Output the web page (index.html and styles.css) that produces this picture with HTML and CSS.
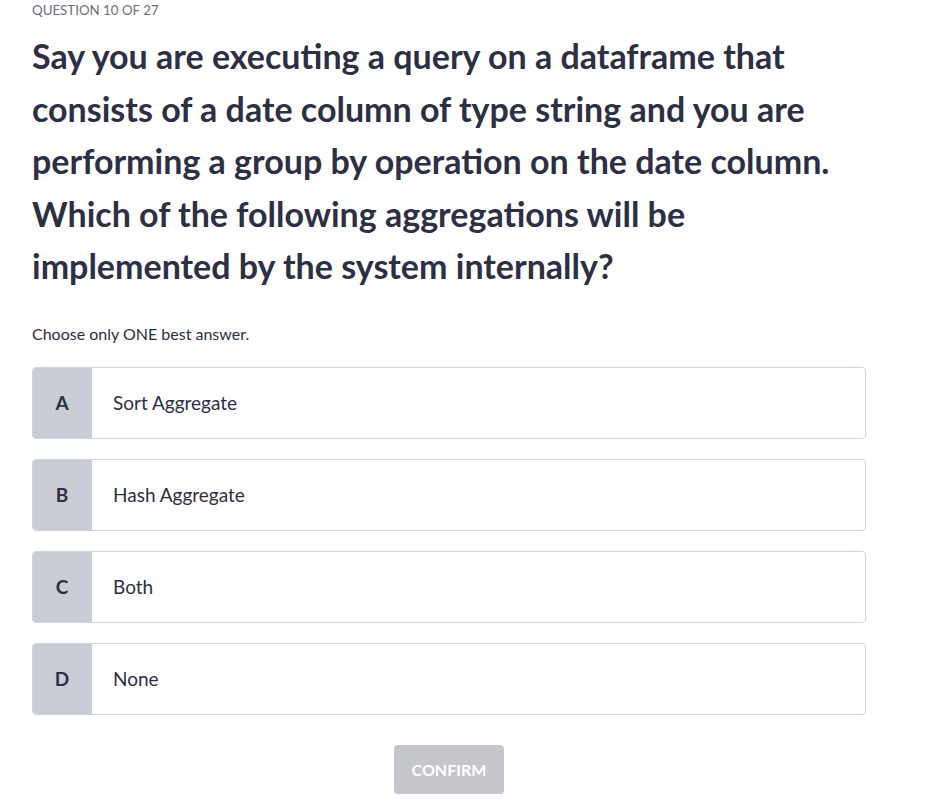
FILE: index.html
```html
<!DOCTYPE html>
<html lang="en">
<head>
<meta charset="utf-8">
<title>Question 10 of 27</title>
<link rel="stylesheet" href="styles.css">
</head>
<body>
<main class="quiz">
  <div class="label">QUESTION 10 OF 27</div>
  <h1 class="title">Say you are executing a query on a dataframe that consists of a date column of type string and you are performing a group by operation on the date column. Which of the following aggregations will be implemented by the system internally?</h1>
  <p class="instr">Choose only ONE best answer.</p>
  <ul class="options">
    <li class="option"><span class="letter">A</span><span class="text">Sort Aggregate</span></li>
    <li class="option"><span class="letter">B</span><span class="text">Hash Aggregate</span></li>
    <li class="option"><span class="letter">C</span><span class="text">Both</span></li>
    <li class="option"><span class="letter">D</span><span class="text">None</span></li>
  </ul>
  <div class="actions"><button class="confirm" disabled>CONFIRM</button></div>
</main>
</body>
</html>
```
FILE: styles.css
```css
* { box-sizing: border-box; }
body {
  margin: 0;
  background: #ffffff;
  font-family: Lato, "Open Sans", sans-serif;
  color: #2d2f45;
}
.quiz {
  width: 834px;
  margin-left: 32px;
}
.label {
  font-size: 13.3px;
  line-height: 20px;
  color: #6a6f7a;
}
.title {
  margin: 10px 0 0;
  font-size: 34px;
  line-height: 52.5px;
  font-weight: 700;
  color: #2d2f45;
}
.instr {
  margin: 29px 0 0;
  font-size: 16px;
  line-height: 24px;
  color: #2d2f45;
}
.options {
  list-style: none;
  margin: 21px 0 0;
  padding: 0;
  display: flex;
  flex-direction: column;
  gap: 20px;
}
.option {
  display: flex;
  align-items: stretch;
  height: 72px;
  border: 1px solid #d1d2e0;
  border-radius: 4px;
  overflow: hidden;
  background: #fff;
}
.letter {
  width: 60px;
  flex: none;
  display: flex;
  align-items: center;
  justify-content: center;
  background: #cacdd6;
  font-weight: 700;
  font-size: 19px;
  margin: -1px 0 -1px -1px;
}
.text {
  display: flex;
  align-items: center;
  padding-left: 21px;
  font-size: 19px;
}
.actions {
  display: flex;
  justify-content: center;
  margin-top: 30px;
}
.confirm {
  width: 110px;
  height: 49px;
  border: none;
  border-radius: 4px;
  background: #c5c6cc;
  color: #fff;
  font-family: inherit;
  font-weight: 700;
  font-size: 16px;
  padding: 0;
}
```
